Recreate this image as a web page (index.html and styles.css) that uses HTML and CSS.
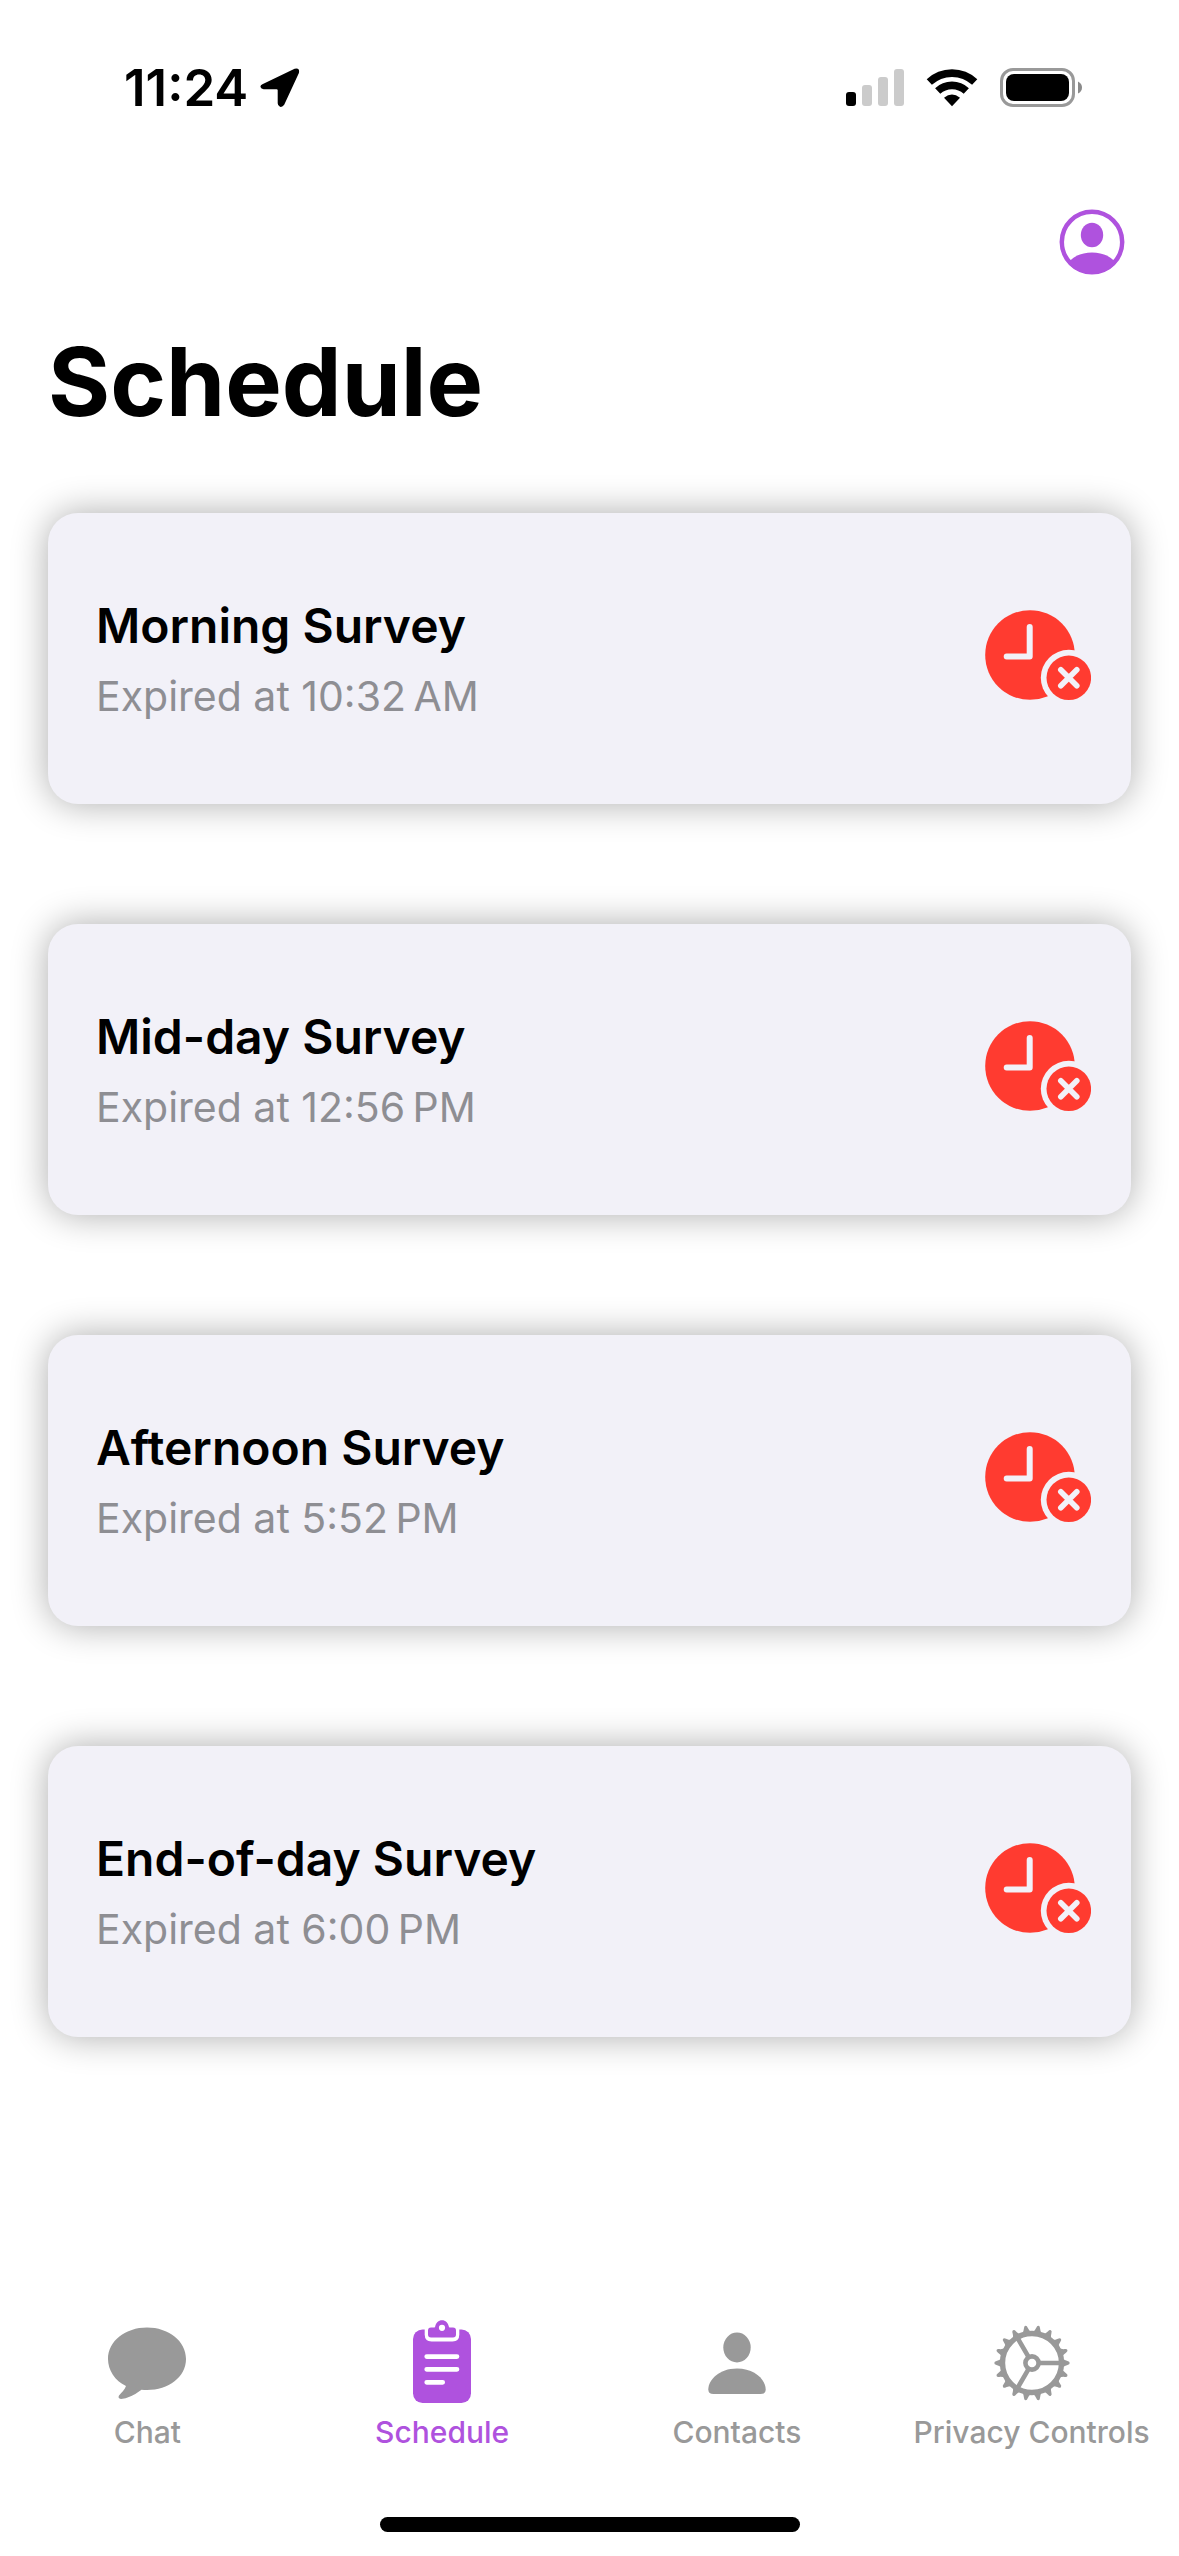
FILE: index.html
```html
<!DOCTYPE html>
<html lang="en">
<head>
<meta charset="utf-8">
<meta name="viewport" content="width=device-width, initial-scale=1">
<title>Schedule</title>
<link rel="stylesheet" href="styles.css">
</head>
<body>
<svg class="defs" aria-hidden="true">
  <symbol id="expired" viewBox="0 0 106 102">
    <circle cx="45" cy="45" r="44.8" fill="#ff3b30"/>
    <path d="M44.7 17V46.6H21.7" fill="none" stroke="#f2f1f8" stroke-width="6" stroke-linecap="round" stroke-linejoin="round"/>
    <circle cx="83.8" cy="67.8" r="28" fill="#f2f1f8"/>
    <circle cx="83.8" cy="67.8" r="22.3" fill="#ff3b30"/>
    <path d="M75.8 59.8l16 16M91.8 59.8l-16 16" stroke="#f2f1f8" stroke-width="5.6" stroke-linecap="round"/>
  </symbol>
</svg>

<div class="screen">
  <div class="status">
    <div class="status-side">
      <span class="clock">11:24</span>
      <svg width="40" height="40" viewBox="0 0 40 40" aria-hidden="true"><path d="M2.4 16.200L34.600.800Q40-.8 38.900 4.900L24.200 36.800Q22.500 39.400 20 38.800Q17.700 38 17.700 35.300V22.300Q17.700 21.200 16.600 21.200H3.700Q1 21 .500 19Q.200 17.200 2.400 16.200Z"/></svg>
    </div>
    <div class="status-side status-right">
      <svg width="58" height="40" viewBox="0 0 58 40" aria-hidden="true">
        <rect x="0" y="24" width="10" height="14" rx="3"/>
        <g fill="#cbcbcb"><rect x="16" y="17" width="10" height="21" rx="3"/><rect x="32" y="9" width="10" height="29" rx="3"/><rect x="48" y="1" width="10" height="37" rx="3"/></g>
      </svg>
      <svg width="52" height="40" viewBox="0 0 52 40" aria-hidden="true">
        <g fill="none" stroke="#000" stroke-width="7.6"><path d="M3.300 14.100A33.200 33.200 0 0 1 48.700 14.100"/><path d="M11.700 23A20.900 20.900 0 0 1 40.300 23"/></g>
        <path d="M26 38.200L18 29.800Q26 23 34 29.800Z"/>
      </svg>
      <svg width="84" height="40" viewBox="0 0 84 40" aria-hidden="true">
        <rect x="1.500" y="1.500" width="72" height="36" rx="11.500" fill="none" stroke="#999" stroke-width="3"/>
        <rect x="6" y="6" width="63" height="27" rx="8"/>
        <path d="M78 13.500Q82 15.500 82 19.500T78 25.500Z" fill="#8a8a8a"/>
      </svg>
    </div>
  </div>

  <header class="header">
    <div class="toolbar">
      <button class="profile" type="button" aria-label="Account">
        <svg width="66" height="66" viewBox="0 0 66 66" aria-hidden="true">
          <clipPath id="disc"><circle cx="33" cy="33" r="32"/></clipPath>
          <circle cx="33" cy="33" r="30.200" fill="none" stroke="currentColor" stroke-width="4.500"/>
          <ellipse cx="33" cy="26" rx="11.200" ry="12.200" fill="currentColor"/>
          <path d="M8 55Q17 43.500 33 43.500T58 55V66H8Z" fill="currentColor" clip-path="url(#disc)"/>
        </svg>
      </button>
    </div>
    <h1 class="title">Schedule</h1>
  </header>

  <main class="main">
    <ul class="surveys">
      <li class="card"><div class="card-text"><h2 class="card-title">Morning Survey</h2><p class="card-note">Expired at 10:32&#8239;AM</p></div><svg class="card-icon" role="img" aria-label="Expired"><use href="#expired"/></svg></li>
      <li class="card"><div class="card-text"><h2 class="card-title">Mid-day Survey</h2><p class="card-note">Expired at 12:56&#8239;PM</p></div><svg class="card-icon" role="img" aria-label="Expired"><use href="#expired"/></svg></li>
      <li class="card"><div class="card-text"><h2 class="card-title">Afternoon Survey</h2><p class="card-note">Expired at 5:52&#8239;PM</p></div><svg class="card-icon" role="img" aria-label="Expired"><use href="#expired"/></svg></li>
      <li class="card"><div class="card-text"><h2 class="card-title">End-of-day Survey</h2><p class="card-note">Expired at 6:00&#8239;PM</p></div><svg class="card-icon" role="img" aria-label="Expired"><use href="#expired"/></svg></li>
    </ul>
  </main>

  <nav class="tabs" aria-label="Main">
    <a class="tab" href="#chat">
      <svg class="tab-icon" viewBox="0 0 90 90" aria-hidden="true"><path d="M45 11.500C66.500 11.500 84 25 84 43C84 61 66.500 74 45 74Q42 74 39.500 73.800Q28 82.500 19 83Q15.500 82.500 17 79.500C19.500 76.500 23 73.500 24 70C13 65 6 54 6 43C6 25 23.500 11.500 45 11.500Z" fill="currentColor"/></svg>
      <span>Chat</span>
    </a>
    <a class="tab tab-current" href="#schedule" aria-current="page">
      <svg class="tab-icon" viewBox="0 0 90 90" aria-hidden="true">
        <rect x="16" y="13.500" width="58" height="73.500" rx="9.500" fill="currentColor"/>
        <path d="M27.700 10V18.500Q27.700 25.400 34.500 25.400H55.500Q62.300 25.400 62.300 18.500V10Z" fill="#fff"/>
        <path d="M34 11.500H37.300Q38 11.500 38.200 10.600C38.800 6.800 41.500 4.300 45 4.300S51.200 6.800 51.800 10.600Q52 11.500 52.700 11.500H56Q59 11.500 59 14.500V18.500Q59 21.500 56 21.500H34Q31 21.500 31 18.500V14.500Q31 11.500 34 11.500Z" fill="currentColor"/>
        <circle cx="45" cy="11.800" r="3.100" fill="#fff"/>
        <path d="M29.700 40.600H60M29.700 53.300H60M29.700 66.300H45.700" stroke="#fff" stroke-width="4.700" stroke-linecap="round"/>
      </svg>
      <span>Schedule</span>
    </a>
    <a class="tab" href="#contacts">
      <svg class="tab-icon" viewBox="0 0 90 90" aria-hidden="true"><ellipse cx="45" cy="31.500" rx="13.700" ry="15" fill="currentColor"/><path d="M16.300 73.500C16.300 64 27 52.500 45 52.500S73.700 64 73.700 73.500Q73.700 78 68.500 78H21.500Q16.300 78 16.300 73.500Z" fill="currentColor"/></svg>
      <span>Contacts</span>
    </a>
    <a class="tab" href="#privacy">
      <svg class="tab-icon" viewBox="-45 -47 90 90" aria-hidden="true">
        <defs><path id="tooth" d="M30-4.700Q33-2.500 35.500-1.900Q37.700-1.500 37.700 0T35.500 1.900Q33 2.500 30 4.700Z" fill="currentColor"/><g id="teeth"><use href="#tooth"/><use href="#tooth" transform="rotate(20)"/><use href="#tooth" transform="rotate(40)"/></g></defs>
        <use href="#teeth"/><use href="#teeth" transform="rotate(60)"/><use href="#teeth" transform="rotate(120)"/><use href="#teeth" transform="rotate(180)"/><use href="#teeth" transform="rotate(240)"/><use href="#teeth" transform="rotate(300)"/>
        <g fill="none" stroke="currentColor"><circle r="29.500" stroke-width="5.400"/><circle r="6.600" stroke-width="4.600"/><path d="M7 0H29M-3.500 6.100L-14.500 25.100M-3.500-6.100L-14.500-25.100" stroke-width="4.600"/></g>
      </svg>
      <span>Privacy Controls</span>
    </a>
  </nav>
  <div class="home-bar"></div>
</div>
</body>
</html>
```

FILE: styles.css
```css
* {
  box-sizing: border-box;
}

body {
  margin: 0;
  background: #fff;
  color: #000;
  font-family: Inter, "Liberation Sans", sans-serif;
}

svg {
  display: block;
  flex: none;
}

.defs {
  position: absolute;
  width: 0;
  height: 0;
}

.screen {
  display: flex;
  flex-direction: column;
  min-height: 100vh;
  padding-bottom: 24px;
}

.status {
  display: flex;
  justify-content: space-between;
  align-items: center;
  height: 176px;
  padding: 0 95px 0 124px;
}

.status-side {
  display: flex;
  align-items: center;
  gap: 12px;
}

.status-right {
  gap: 22px;
}

.clock {
  font-size: 51px;
  line-height: 60px;
  font-weight: 600;
}

.header {
  padding: 0 48px;
}

.toolbar {
  display: flex;
  justify-content: flex-end;
  align-items: center;
  height: 132px;
  padding-right: 6px;
}

.profile {
  padding: 0;
  border: 0;
  background: none;
  color: #af52de;
}

.title {
  margin: 12px 0 0;
  font-size: 95px;
  line-height: 124px;
  font-weight: 700;
}

.main {
  flex: 1;
  padding: 69px 48px;
}

.surveys {
  display: flex;
  flex-direction: column;
  gap: 120px;
  margin: 0;
  padding: 0;
  list-style: none;
}

.card {
  display: flex;
  justify-content: space-between;
  align-items: center;
  padding: 83px 40px 78px 48px;
  border-radius: 30px;
  background: #f2f1f8;
  box-shadow: 0 0 36px rgba(0, 0, 0, 0.33);
}

.card-text {
  display: flex;
  flex-direction: column;
  gap: 10px;
}

.card-title,
.card-note {
  margin: 0;
  line-height: 60px;
}

.card-title {
  font-size: 48px;
  font-weight: 600;
}

.card-note {
  color: #8e8e93;
  font-size: 41px;
}

.card-icon {
  width: 106px;
  height: 102px;
}

.tabs {
  display: grid;
  grid-template-columns: repeat(4, 1fr);
  padding-bottom: 67px;
}

.tab {
  display: flex;
  flex-direction: column;
  align-items: center;
  gap: 8px;
  color: #999;
  font-size: 30px;
  line-height: 36px;
  font-weight: 500;
  text-decoration: none;
  white-space: nowrap;
}

.tab-current {
  color: #af52de;
}

.tab-icon {
  width: 90px;
  height: 90px;
}

.home-bar {
  align-self: center;
  width: 420px;
  max-width: 60%;
  height: 15px;
  border-radius: 8px;
  background: #000;
}
```
